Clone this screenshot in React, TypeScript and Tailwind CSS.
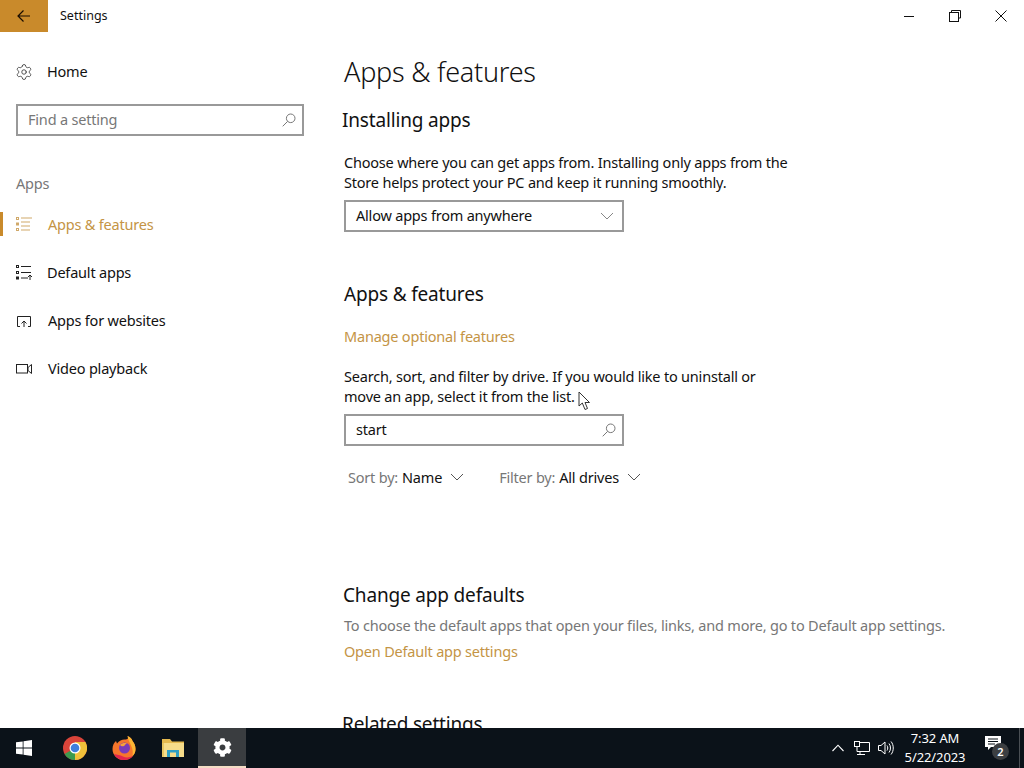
import { Settings } from "lucide-react";
import { FaCog } from "react-icons/fa";

const font = "font-['Noto_Sans',sans-serif]";

function Gl({ className = "" }: { className?: string }) {
  return (
    <svg width="14" height="14" viewBox="0 0 14 14" fill="none" stroke="#777" strokeWidth="1" className={className}>
      <circle cx="8.700" cy="5.300" r="4.300" />
      <path d="M5.700 8.300 .7 13.300" />
    </svg>
  );
}

function Chev({ className = "" }: { className?: string }) {
  return (
    <svg width="14" height="8" viewBox="0 0 14 8" fill="none" stroke="#555" strokeWidth="1" className={className}>
      <path d="M1 1l6 6 6-6" />
    </svg>
  );
}

function NavItem({ icon, label, active, tight }: { icon: React.ReactNode; label: string; active?: boolean; tight?: boolean }) {
  return (
    <div className="relative flex items-center h-12 pl-4">
      {active && <div className="absolute left-0 top-[11px] w-[3px] h-6 bg-[#c98a2b]" />}
      <div className="w-4 h-4 flex items-center justify-center">{icon}</div>
      <span className={`${tight ? "ml-[15px]" : "ml-4"} pb-[2px] text-[14.5px] leading-5 tracking-[-0.2px] ${active ? "text-[#c49445]" : "text-[#111]"}`}>{label}</span>
    </div>
  );
}

function ListIcon({ color }: { color: string }) {
  return (
    <svg width="16" height="16" viewBox="0 0 16 16" fill="none" stroke={color} strokeWidth="1">
      <rect x="0.500" y="0.500" width="2" height="2" opacity="0.8" />
      <rect x="0.500" y="6" width="2" height="2" opacity="0.8" />
      <rect x="0.500" y="11.500" width="2" height="2" opacity="0.8" />
      <path d="M5 1h11M5 5h9M5 9h9M5 13h9" opacity="0.8" />
    </svg>
  );
}

function DefaultIcon() {
  return (
    <svg width="16" height="16" viewBox="0 0 16 16" fill="none" stroke="#222" strokeWidth="1">
      <rect x="0.500" y="0.500" width="2" height="2" />
      <rect x="0.500" y="6.500" width="2" height="2" />
      <rect x="0.500" y="12" width="2" height="2" />
      <path d="M5 1.500h10M5 7.500h10M5 13h7M14 15V10M12 12l2-2 2 2" />
    </svg>
  );
}

function WebIcon() {
  return (
    <svg width="16" height="16" viewBox="0 0 16 16" fill="none" stroke="#222" strokeWidth="1">
      <path d="M4 13.500H1.500v-10h13v10H12M8 14V8M5.500 10.500 8 8l2.500 2.500" />
    </svg>
  );
}

function VideoIcon() {
  return (
    <svg width="16" height="16" viewBox="0 0 16 16" fill="none" stroke="#222" strokeWidth="1">
      <rect x="0.500" y="3.500" width="11" height="8.500" />
      <path d="M15.500 3.500 12 6.500v3l3.500 3z" />
    </svg>
  );
}

function Chrome() {
  return (
    <svg width="24" height="24" viewBox="0 0 24 24">
      <circle cx="12" cy="12" r="12" fill="#d9443a" />
      <path d="M12 12 1.600 18A12 12 0 0 0 12 24L17 15Z" fill="#3a9a4e" />
      <path d="M12 12V24A12 12 0 0 0 22.400 6H12Z" fill="#f0c03a" />
      <circle cx="12" cy="12" r="5.500" fill="#fff" />
      <circle cx="12" cy="12" r="4.300" fill="#3f7fdc" />
    </svg>
  );
}

function Firefox() {
  return (
    <svg width="24" height="24" viewBox="0 0 24 24">
      <path d="M12 24C5 24 .5 19 .5 13 .5 9.500 2 6.500 4 5l1 2.500C7 5 10 3.500 12.500 3.500 16 3.500 17 2 15.500 0c3 1 4.500 3 5 5 1.500 1.500 3 4.500 3 8 0 6-5 11-11.500 11Z" fill="#f6762c" />
      <path d="M15.500 0c3 1 4.500 3 5 5 1.500 1.500 3 4.500 3 8 0 3-1 5-3 7 .500-3 .500-7-1.500-10.500C18 7 16 4 15.500 0Z" fill="#fbb634" />
      <path d="M2 18c2 4 6 6 10 6 4 0 7-1.500 9-4-3 1.500-7 2-10 .500C8 19 5 19 2 18Z" fill="#e3264d" />
      <circle cx="12.500" cy="12" r="5.500" fill="#7a3bb8" />
      <path d="M8 9c2-2 5-2.500 7-1.500-2 .500-2 2-3 2.500-1 .500-3 .500-4-1Z" fill="#f6a13a" />
    </svg>
  );
}

function Folder() {
  return (
    <svg width="22" height="20" viewBox="0 0 22 20">
      <path d="M0 1h8l2 2.500h12V6H0Z" fill="#e5b94e" />
      <rect y="5" width="22" height="14" fill="#f6dc8a" />
      <rect x="0" y="5" width="2" height="14" fill="#e9c660" />
      <rect x="5" y="12" width="12" height="7" fill="#2f9fc4" />
      <rect x="8" y="14.500" width="6" height="4.500" fill="#f6dc8a" />
    </svg>
  );
}

function Cursor() {
  return (
    <svg width="14" height="20" viewBox="0 0 14 20" className="absolute left-[578px] top-[391px]">
      <path d="M1 1v14l3.300-3 2.700 6.500 2.500-1L7 11.500h4.500Z" fill="#fff" stroke="#333" strokeWidth="1" />
    </svg>
  );
}

const h2 = "text-[19px] leading-7 tracking-[-0.17px]";

export default function App() {
  return (
    <div className={`${font} relative w-[1024px] h-[768px] overflow-hidden bg-white flex flex-col text-[#111]`}>
      <div className="h-8 flex items-center shrink-0">
        <div className="w-12 h-8 bg-[#c98a2b] flex items-center justify-center">
          <svg width="16" height="16" viewBox="0 0 16 16" fill="none" stroke="#1a0d00" strokeWidth="1.200"><path d="M14 8H2M7.500 2.500 2 8l5.500 5.500" /></svg>
        </div>
        <span className="ml-3 text-[12.500px] leading-4">Settings</span>
        <div className="ml-auto flex h-8">
          <div className="w-[46px] flex items-center justify-center">
            <svg width="12" height="12" viewBox="0 0 12 12" stroke="#111" fill="none"><path d="M1 6.500h10" /></svg>
          </div>
          <div className="w-[46px] flex items-center justify-center">
            <svg width="12" height="12" viewBox="0 0 12 12" stroke="#111" fill="none"><path d="M2.500 2.500V.5h9v7.500h-2" /><rect x="0.500" y="2.500" width="9" height="9" /></svg>
          </div>
          <div className="w-[46px] flex items-center justify-center">
            <svg width="12" height="12" viewBox="0 0 12 12" stroke="#111" fill="none"><path d="M.5.5l11 11M11.500.5l-11 11" /></svg>
          </div>
        </div>
      </div>

      <div className="flex-1 flex min-h-0 overflow-hidden">
        <aside className="w-[344px] shrink-0 pt-5">
          <div className="flex items-center h-10 pl-[15px]">
            <Settings strokeWidth={1} className="w-[18px] h-[18px] text-[#222]" />
            <span className="ml-[14px] text-[14.500px] tracking-[-0.2px]">Home</span>
          </div>
          <div className="mt-3 ml-4 w-[288px] h-8 border-2 border-[#999] flex items-center pl-[10px] pr-[6px]">
            <span className="text-[14.500px] tracking-[-0.2px] text-[#777]">Find a setting</span>
            <Gl className="ml-auto" />
          </div>
          <div className="mt-9 pl-4 h-6 flex items-center text-[14.500px] tracking-[-0.2px] text-[#777]">Apps</div>
          <div className="mt-[5px]">
            <NavItem active label="Apps & features" icon={<ListIcon color="#c49445" />} />
            <NavItem tight label="Default apps" icon={<DefaultIcon />} />
            <NavItem label="Apps for websites" icon={<WebIcon />} />
            <NavItem label="Video playback" icon={<VideoIcon />} />
          </div>
        </aside>

        <main className="flex-1 pt-5 min-w-0 text-[14.500px] leading-5 tracking-[-0.2px]">
          <h1 className="text-[27px] leading-10 font-light tracking-[-0.25px]">Apps &amp; features</h1>
          <h2 className={`mt-[14px] -ml-[2px] ${h2}`}>Installing apps</h2>
          <p className="mt-[18px]">Choose where you can get apps from. Installing only apps from the<br />Store helps protect your PC and keep it running smoothly.</p>
          <div className="mt-2 w-[280px] h-8 border-2 border-[#999] flex items-center pl-[10px] pr-[8px]">
            <span className="pb-[2px]">Allow apps from anywhere</span>
            <Chev className="ml-auto opacity-70" />
          </div>
          <h2 className={`mt-12 ${h2}`}>Apps &amp; features</h2>
          <p className="mt-[18px] text-[#c49445]">Manage optional features</p>
          <p className="mt-5">Search, sort, and filter by drive. If you would like to uninstall or<br />move an app, select it from the list.</p>
          <div className="mt-2 w-[280px] h-8 border-2 border-[#999] flex items-center pl-[10px] pr-[6px]">
            <span className="pb-[2px]">start</span>
            <Gl className="ml-auto" />
          </div>
          <div className="mt-[21px] flex items-center pl-1">
            <span className="text-[#777]">Sort by:</span>
            <span className="ml-1">Name</span>
            <Chev className="ml-[8px]" />
            <span className="ml-[35px] text-[#777]">Filter by:</span>
            <span className="ml-1">All drives</span>
            <Chev className="ml-[8px]" />
          </div>
          <h2 className={`mt-[94px] -ml-px ${h2}`}>Change app defaults</h2>
          <p className="mt-[6px] text-[#777]">To choose the default apps that open your files, links, and more, go to Default app settings.</p>
          <p className="mt-[6px] text-[#c49445]">Open Default app settings</p>
          <h2 className={`mt-[49px] -ml-[2px] ${h2}`}>Related settings</h2>
        </main>
      </div>

      <div className="h-10 shrink-0 bg-[#0b1219] flex items-stretch text-white">
        <div className="w-12 flex items-center justify-center">
          <svg width="16" height="16" viewBox="0 0 16 16" fill="#fff"><path d="M0 2.300 6.700 1.400v6.200H0ZM7.500 1.300 16 0v7.600H7.500ZM0 8.400h6.700v6.200L0 13.700ZM7.500 8.400H16V16l-8.500-1.200Z" /></svg>
        </div>
        <div className="w-[53px] flex items-center justify-center"><Chrome /></div>
        <div className="w-[46px] flex items-center justify-center"><Firefox /></div>
        <div className="w-[51px] flex items-center justify-center"><Folder /></div>
        <div className="w-12 bg-[#3a3d40] flex flex-col">
          <div className="flex-1 flex items-center justify-center"><FaCog className="w-[19px] h-[19px] text-white" /></div>
          <div className="h-[2px] bg-[#f3dcc4]" />
        </div>
        <div className="ml-auto flex items-center">
          <svg width="12" height="8" viewBox="0 0 12 8" fill="none" stroke="#fff" strokeWidth="1.100"><path d="M.5 7 6 1.200 11.500 7" /></svg>
          <svg width="16" height="16" viewBox="0 0 16 16" fill="none" stroke="#fff" strokeWidth="1" className="ml-[10px]">
            <rect x="0.500" y="1.500" width="5" height="5" />
            <path d="M5.500 2.500h10v9H3V6.500M6 11.500V14M3 14.500h8" />
          </svg>
          <svg width="16" height="16" viewBox="0 0 16 16" fill="none" stroke="#fff" strokeWidth="1" className="ml-2">
            <path d="M.5 5.500h2.500L7 2v12l-4-3.500H.5Z" />
            <path d="M9 5.500c1 1.500 1 3.500 0 5M11 3.500c2 2.500 2 6.500 0 9M13 1.500c3 3.500 3 9.500 0 13" />
          </svg>
          <div className="w-[82px] flex flex-col items-center text-[13px] leading-[19px] tracking-[-0.1px]">
            <span>7:32 AM</span>
            <span>5/22/2023</span>
          </div>
          <div className="relative w-6 h-6 ml-[9px] mr-[10px]">
            <svg width="16" height="14" viewBox="0 0 16 14" className="absolute left-0 top-0" fill="#fff"><path d="M0 0h16v11H6l-3 3v-3H0Z" /><path d="M3 3h10M3 5.500h10M3 8h7" stroke="#0b1219" strokeWidth="1" /></svg>
            <div className="absolute left-[7px] top-[7px] w-[17px] h-[17px] rounded-full bg-[#3c3f42] flex items-center justify-center text-[11px] font-semibold leading-none text-white">2</div>
          </div>
          <div className="w-[5px] self-stretch border-l border-[#4a4f54]" />
        </div>
      </div>

      <Cursor />
    </div>
  );
}
